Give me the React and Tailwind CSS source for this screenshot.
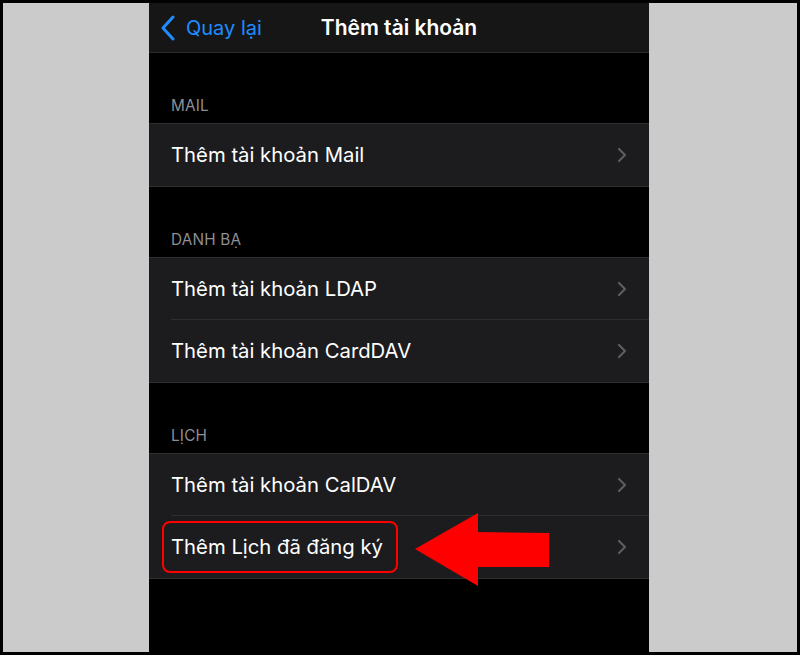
import React from 'react';

const font = { fontFamily: 'Inter, "Noto Sans", "Liberation Sans", sans-serif' };

const Chevron = () => (
  <svg width="10" height="16" viewBox="0 0 10 16" className="shrink-0">
    <path d="M2 2 L8 8 L2 14" fill="none" stroke="#5c5c61" strokeWidth="2.2" strokeLinecap="round" strokeLinejoin="round" />
  </svg>
);

const SectionHeader = ({ label, first }) => (
  <div className={`${first ? 'h-[71px]' : 'h-[70px]'} flex items-end pl-[22px] pb-[5px] text-[15.3px] text-[#8e8e93] tracking-[0.2px]`}>
    {label}
  </div>
);

const Row = ({ label, last, children }) => (
  <div className="relative h-[62px] flex items-center pl-[22px] bg-[#1c1c1e]">
    <span className="text-[20.3px] text-white leading-none">{label}</span>
    <div className="ml-auto mr-[22px] flex items-center">
      <Chevron />
    </div>
    {!last && <div className="absolute left-[22px] right-0 bottom-0 h-px bg-[#2e2e31]" />}
    {children}
  </div>
);

const Group = ({ children }) => (
  <div className="border-y border-[#2e2e31]">{children}</div>
);

export default function App() {
  return (
    <div className="w-[800px] h-[655px] bg-black p-[3px] flex" style={font}>
      <div className="w-[146px] h-full bg-[#cbcbcb]" />
      <div className="relative w-[500px] h-full bg-black overflow-hidden">
        <div className="h-[50px] bg-[#161616] border-b border-[#2a2a2a] flex items-center relative">
          <div className="flex items-center pl-[11px] gap-[10px] text-[#1e8cff]">
            <svg width="16" height="26" viewBox="0 0 16 26">
              <path d="M13 2 L3 13 L13 24" fill="none" stroke="#1e8cff" strokeWidth="3" strokeLinecap="round" strokeLinejoin="round" />
            </svg>
            <span className="text-[20px] leading-none">Quay lại</span>
          </div>
          <div className="absolute inset-0 flex items-center justify-center pointer-events-none">
            <span className="text-[21px] font-semibold text-white leading-none">Thêm tài khoản</span>
          </div>
        </div>

        <div className="-mt-px">
          <SectionHeader label="MAIL" first />
          <Group>
            <Row label="Thêm tài khoản Mail" last />
          </Group>

          <SectionHeader label="DANH BẠ" />
          <Group>
            <Row label="Thêm tài khoản LDAP" />
            <Row label="Thêm tài khoản CardDAV" last />
          </Group>

          <SectionHeader label="LỊCH" />
          <Group>
            <Row label="Thêm tài khoản CalDAV" />
            <Row label="Thêm Lịch đã đăng ký" last>
              <div className="absolute left-[13px] top-[5px] w-[236px] h-[52px] border-2 border-[#ff0000] rounded-[8px]" />
            </Row>
          </Group>
        </div>

        <svg className="absolute left-[265px] top-[507px]" width="138" height="78" viewBox="0 0 138 78">
          <polygon points="1,39 64,3 64,22 135,23 135,57 64,57 64,76" fill="#ff0000" />
        </svg>
      </div>
      <div className="w-[148px] h-full bg-[#cbcbcb]" />
    </div>
  );
}
